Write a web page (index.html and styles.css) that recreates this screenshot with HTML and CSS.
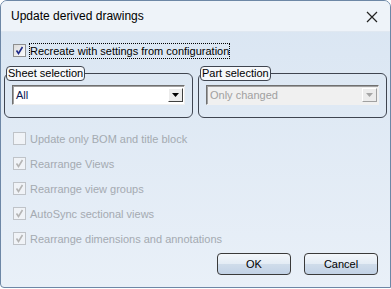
FILE: index.html
```html
<!DOCTYPE html>
<html lang="en">
<head>
  <meta charset="UTF-8" />
  <title>Update derived drawings</title>
  <link rel="stylesheet" href="styles.css">
</head>
<body>
  <div class="window">
    <div class="titlebar">
      <span class="title">Update derived drawings</span>
      <svg class="close" width="12" height="12" viewBox="0 0 12 12"><path d="M1 1L11 11M11 1L1 11" stroke="#222" stroke-width="1.2"/></svg>
    </div>

    <div class="content">
      <label class="check top-check">
        <span class="box"><svg width="9" height="9" viewBox="0 0 9 9"><path d="M1.5 4.5L3.5 7.5L7.5 1" fill="none" stroke="#1f2b8a" stroke-width="1.6"/></svg></span>
        <span class="focus">Recreate with settings from configuration</span>
      </label>

      <div class="groups">
        <fieldset class="group sheet">
          <legend>Sheet selection</legend>
          <div class="select">
            <span class="value">All</span>
            <span class="arrow"><svg width="7" height="4" viewBox="0 0 7 4"><path d="M0 0H7L3.5 4Z" fill="#000"/></svg></span>
          </div>
        </fieldset>
        <fieldset class="group part">
          <legend>Part selection</legend>
          <div class="select disabled">
            <span class="value">Only changed</span>
            <span class="arrow"><svg width="7" height="4" viewBox="0 0 7 4"><path d="M0 0H7L3.5 4Z" fill="#a6a6a6"/></svg></span>
          </div>
        </fieldset>
      </div>

      <div class="options">
        <label class="check disabled"><span class="box"></span>Update only BOM and title block</label>
        <label class="check disabled"><span class="box"><svg width="9" height="9" viewBox="0 0 9 9"><path d="M1.5 4.5L3.5 7.5L7.5 1" fill="none" stroke="#b5b5b5" stroke-width="1.6"/></svg></span>Rearrange Views</label>
        <label class="check disabled"><span class="box"><svg width="9" height="9" viewBox="0 0 9 9"><path d="M1.5 4.5L3.5 7.5L7.5 1" fill="none" stroke="#b5b5b5" stroke-width="1.6"/></svg></span>Rearrange view groups</label>
        <label class="check disabled"><span class="box"><svg width="9" height="9" viewBox="0 0 9 9"><path d="M1.5 4.5L3.5 7.5L7.5 1" fill="none" stroke="#b5b5b5" stroke-width="1.6"/></svg></span>AutoSync sectional views</label>
        <label class="check disabled"><span class="box"><svg width="9" height="9" viewBox="0 0 9 9"><path d="M1.5 4.5L3.5 7.5L7.5 1" fill="none" stroke="#b5b5b5" stroke-width="1.6"/></svg></span>Rearrange dimensions and annotations</label>
      </div>

      <div class="buttons">
        <button class="btn">OK</button>
        <button class="btn">Cancel</button>
      </div>
    </div>
  </div>
</body>
</html>
```

FILE: styles.css
```css
body { margin: 0; background: #fff; font-family: "Liberation Sans", Arial, sans-serif; font-size: 11px; }
.window { width: 389px; height: 286px; border: 1px solid #6d87a6; border-radius: 7px 7px 0 4px; background: linear-gradient(#d9e5f2, #e9f0f8); overflow: hidden; display: flex; flex-direction: column; }
.titlebar { height: 31px; background: #eef3f9; display: flex; align-items: center; justify-content: space-between; padding: 0 12px 0 10px; border-bottom: 1px solid #e0e8f1; box-sizing: border-box; }
.title { font-size: 12px; color: #000; }
.close { margin-top: 1px; }
.content { padding: 10px 4px 0 3px; flex: 1; display: flex; flex-direction: column; }
.check { display: flex; align-items: center; gap: 4px; height: 13px; color: #000; }
.box { width: 11px; height: 11px; border: 1px solid #8e8f8f; background: linear-gradient(135deg, #dcdcdc, #fbfbfb); display: flex; align-items: center; justify-content: center; flex: none; }
.top-check { margin-left: 9px; margin-top: 2px; }
.focus { outline: 1px dotted #000; padding: 1px 0; }
.groups { display: flex; gap: 5px; margin-top: 9px; }
.group { margin: 0; padding: 4px 7px 12px 7px; border: 1px solid #3f4550; border-radius: 6px; flex: none; }
.sheet { width: 173px; }
.part { width: 173px; }
.group legend { padding: 0 1px; border: 1px solid #3f4550; border-radius: 4px; background: #f6f8fb; line-height: 13px; margin-left: -6px; color: #000; }
.select { height: 20px; box-sizing: border-box; border: 1px solid #707070; border-right-color: #f0f0f0; border-bottom-color: #f0f0f0; box-shadow: inset 1px 1px 0 #a0a0a0; background: #fff; display: flex; align-items: center; justify-content: space-between; padding: 0 1px 0 3px; }
.select .value { color: #0c1a55; }
.arrow { width: 15px; height: 14px; box-sizing: border-box; border: 1px solid; border-color: #fff #404040 #404040 #fff; background: #ececec; display: flex; align-items: center; justify-content: center; }
.select.disabled { background: #f0f0f0; }
.select.disabled .value { color: #a0a0a0; }
.select.disabled .arrow { border-color: #fff #a0a0a0 #a0a0a0 #fff; }
.options { display: flex; flex-direction: column; gap: 12px; margin: 14px 0 0 9px; }
.check.disabled { color: #a4aab1; }
.check.disabled .box { border-color: #bfc3c8; background: #f0f3f7; }
.buttons { display: flex; justify-content: flex-end; gap: 13px; margin: 8px 8px 0 0; }
.btn { width: 74px; height: 22px; font: inherit; color: #000; border: 1px solid #3a3a3a; border-radius: 4px; background: linear-gradient(#f3f7fb, #e4ecf5 48%, #cfdcea 52%, #c2d2e6); padding: 0; }
```
